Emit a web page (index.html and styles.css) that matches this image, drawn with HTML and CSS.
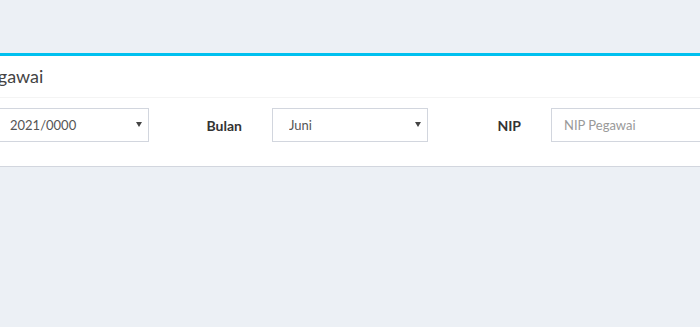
FILE: index.html
```html
<!DOCTYPE html>
<html lang="id">
<head>
    <meta charset="UTF-8">
    <meta name="viewport" content="width=device-width, initial-scale=1.0">
    <title>Pegawai</title>
    <link rel="stylesheet" href="styles.css">
</head>
<body>
    <div class="content">
        <div class="box">
            <div class="box-header">
                <h3 class="box-title">Pegawai</h3>
            </div>

            <div class="box-body">
                <form class="filter-form">
                    <div class="field">
                        <div class="select-wrap">
                            <select class="form-control">
                                <option>2021/0000</option>
                            </select>
                        </div>
                    </div>

                    <label class="field-label">Bulan</label>
                    <div class="field">
                        <div class="select-wrap">
                            <select class="form-control">
                                <option>Juni</option>
                            </select>
                        </div>
                    </div>

                    <label class="field-label">NIP</label>
                    <div class="field">
                        <input type="text" class="form-control" placeholder="NIP Pegawai">
                    </div>
                </form>
            </div>
        </div>
    </div>
</body>
</html>
```

FILE: styles.css
```css
:root {
    --primary-color: #00c0ef;
    --border-color: #d2d6de;
}

body {
    margin: 0;
    background-color: #ecf0f5;
    font-family: Lato, 'Noto Sans', sans-serif;
    font-size: 14px;
    color: #333;
    overflow: hidden;
}

.content {
    padding-top: 53px;
}

.box {
    margin-left: -32px;
    width: 1000px;
    background: white;
    border-top: 3px solid var(--primary-color);
    border-bottom: 1px solid var(--border-color);
}

.box-header {
    padding: 10px 10px 11px;
    border-bottom: 1px solid #f4f4f4;
}

.box-title {
    margin: 0;
    font-size: 18px;
    font-weight: normal;
    line-height: 20px;
    color: #444;
}

.box-body {
    padding: 10px 10px 24px;
}

.filter-form {
    display: grid;
    grid-template-columns: 186px 93px 186px 93px 186px;
    align-items: center;
}

.field {
    padding: 0 15px;
}

.field-label {
    padding: 0 15px;
    text-align: right;
    font-weight: bold;
    color: #333;
}

.select-wrap {
    position: relative;
}

.select-wrap::after {
    content: '';
    position: absolute;
    right: 7px;
    top: 14px;
    border-left: 3px solid transparent;
    border-right: 3px solid transparent;
    border-top: 5px solid #444;
    pointer-events: none;
}

.form-control {
    display: block;
    box-sizing: border-box;
    width: 100%;
    height: 34px;
    margin: 0;
    padding: 6px 12px;
    border: 1px solid var(--border-color);
    border-radius: 0;
    background: white;
    font-family: inherit;
    font-size: 13px;
    color: #555;
    outline: none;
}

select.form-control {
    appearance: none;
    padding-left: 16px;
}

.form-control::placeholder {
    color: #999;
}
```
